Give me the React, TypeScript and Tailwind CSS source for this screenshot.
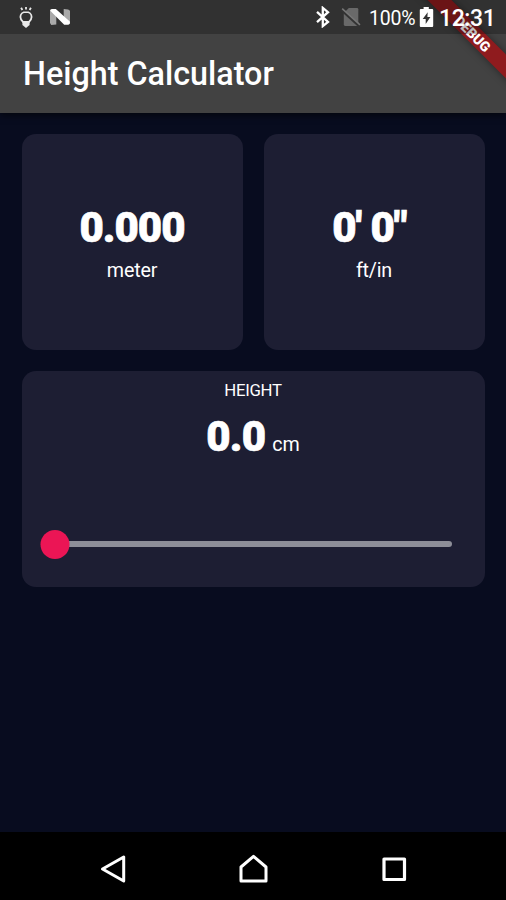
import { useState } from 'react';

const formatFeet = (cm: number) => {
    const inches = Math.round(cm / 2.54);
    return `${Math.floor(inches / 12)}' ${inches % 12}" `;
};

function StatusBar() {
    return (
        <div className="absolute inset-x-0 top-0 z-20 flex h-[34px] items-center bg-black/25 text-white">
            <svg className="ml-[17px] h-[26px] w-[18px]" viewBox="0 0 18 26" fill="none" stroke="#e8e8e8" strokeWidth="1.8">
                <path d="M4.1 3.8 5.4 6M9 2.9v2.5M13.9 3.8 12.6 6" />
                <path d="M9 7.8c-3.3 0-5.6 2.3-5.6 5.1 0 2.3 1.2 3.5 2.7 5.1h5.8c1.5-1.6 2.7-2.8 2.7-5.1 0-2.8-2.3-5.1-5.6-5.1Z" />
                <path d="M5.4 17h7.2v4L9 24l-3.6-3Z" fill="#e8e8e8" stroke="none" />
            </svg>
            <svg className="ml-[14px] h-[18px] w-[22px]" viewBox="0 0 22 18">
                <path d="M1 2.5 7.3 6v10.5l-5 .5L1 15ZM14.7 1l4.5.4 1.8 1.3V16l-6.3-4Z" fill="#a9a9a9" />
                <path d="M1 2.5Q1.3.8 3.3 1h3.5l14 12.6q.6 3-1.8 3.2h-3.8Z" fill="#fff" />
            </svg>
            <svg className="ml-[244px] h-[22px] w-[16px]" viewBox="0 0 16 22" fill="none" stroke="#fff" strokeWidth="2.3">
                <path d="m2 5.9 11 10-5.2 4.2V1.9L13 6.2 2 16.1" />
            </svg>
            <svg className="ml-[10px] h-[20px] w-[20px]" viewBox="0 0 20 20">
                <path d="M7.8 1H16q1.3 0 1.3 1.3V19H4.2Q2.8 19 2.8 17.6V6Z" fill="#696969" />
                <path d="m.5 2.7 17.8 16.1" stroke="#333" strokeWidth="3" />
                <path d="M1.2 1.6 19 17.9" stroke="#777" strokeWidth="1.5" />
            </svg>
            <span className="ml-[8px] w-[47px] whitespace-nowrap pt-[4px] text-[19.5px] leading-none tracking-[-0.2px]">100%</span>
            <svg className="ml-[3px] h-[22px] w-[15px]" viewBox="0 0 15 22">
                <path d="M4.6 1h5.2v2h3.4q1 0 1 1v16q0 1-1 1H1.8q-1 0-1-1V4q0-1 1-1h2.8Z" fill="#fff" />
                <path d="m8.7 6.2-5 6.8h3v5L11.4 11h-3Z" fill="#333" />
            </svg>
            <span className="ml-[5px] whitespace-nowrap pt-[2px] text-[23px] font-medium leading-none tracking-[-0.4px]">12:31</span>
        </div>
    );
}

function DebugBanner() {
    return (
        <div className="pointer-events-none absolute right-0 top-0 z-10 h-[113px] w-[120px] overflow-hidden">
            <div className="absolute left-[7px] top-[24.5px] flex h-[17px] w-[160px] rotate-45 items-center justify-center bg-[#8f1b1e] text-[14px] font-black leading-none tracking-[-0.1px] text-white shadow-[0_0_8px_rgba(0,0,0,0.4)]">
                DEBUG
            </div>
        </div>
    );
}

function ResultCard({ value, unit }: { value: string; unit: string }) {
    return (
        <div className="flex h-[216px] flex-1 flex-col items-center justify-center rounded-[14px] bg-[#1d1e33]">
            <span className="whitespace-pre text-[42px] font-black leading-[49px] tracking-[-1px] [-webkit-text-stroke:0.7px_white]">{value}</span>
            <span className="mt-[7px] text-[19.7px] leading-[23px] tracking-[-0.2px]">{unit}</span>
        </div>
    );
}

export default function App() {
    const [height, setHeight] = useState(0);

    return (
        <div className="relative flex h-[900px] w-[506px] flex-col overflow-hidden bg-[#080c1f] font-['Roboto',sans-serif] text-white">
            <StatusBar />
            <DebugBanner />

            {/* App bar */}
            <header className="flex h-[113px] shrink-0 items-center bg-[#424242] pl-[23px] pt-[36px] shadow-[0_2px_7px_rgba(0,0,0,0.6)]">
                <h1 className="text-[32.3px] font-medium leading-none">Height Calculator</h1>
            </header>

            {/* Content */}
            <main className="flex flex-1 flex-col gap-[21px] px-[21.5px] pt-[21px]">
                <div className="flex gap-[21px]">
                    <ResultCard value={(height / 100).toFixed(3)} unit="meter" />
                    <ResultCard value={formatFeet(height)} unit="ft/in" />
                </div>

                <div className="flex h-[216px] flex-col items-center rounded-[14px] bg-[#1d1e33] pt-[9px]">
                    <span className="text-[16.8px] leading-[20px] tracking-[-0.3px]">HEIGHT</span>
                    <div className="mt-[12px] flex items-baseline gap-[7px] leading-[49px]">
                        <span className="text-[42px] font-black tracking-[-0.8px] [-webkit-text-stroke:0.7px_white]">{height.toFixed(1)}</span>
                        <span className="text-[19.7px]">cm</span>
                    </div>
                    <label className="relative mt-[60px] flex h-[30px] w-full items-center pl-[33.5px] pr-[33px]">
                        <span className="h-[6px] w-full rounded-full bg-[#8d8e98]" />
                        <span
                            className="absolute h-[29px] w-[29px] -translate-x-1/2 rounded-full bg-[#eb1555]"
                            style={{ left: `calc(33.5px + (100% - 66.5px) * ${height / 300})` }}
                        />
                        <input
                            type="range"
                            min={0}
                            max={300}
                            step={0.1}
                            value={height}
                            onChange={(e) => setHeight(Number(e.target.value))}
                            className="absolute inset-x-[20px] cursor-pointer opacity-0"
                        />
                    </label>
                </div>
            </main>

            {/* Navigation bar */}
            <nav className="flex h-[68px] shrink-0 items-center bg-black pt-[6px]">
                <svg className="ml-[100px] h-[30px] w-[27px]" viewBox="0 0 27 30" fill="none" stroke="#fff" strokeWidth="3" strokeLinejoin="round">
                    <path d="M23.7 3v24L2.5 15Z" />
                </svg>
                <svg className="ml-[111px] h-[30px] w-[30px]" viewBox="0 0 30 30" fill="none" stroke="#fff" strokeWidth="3" strokeLinejoin="round">
                    <path d="M3 27V13L15.5 2.3 28 13v14Z" />
                </svg>
                <svg className="ml-[113px] h-[26px] w-[26px]" viewBox="0 0 26 26" fill="none" stroke="#fff" strokeWidth="3.2" strokeLinejoin="round">
                    <path d="M3 3h20.5v20.5H3Z" />
                </svg>
            </nav>
        </div>
    );
}
